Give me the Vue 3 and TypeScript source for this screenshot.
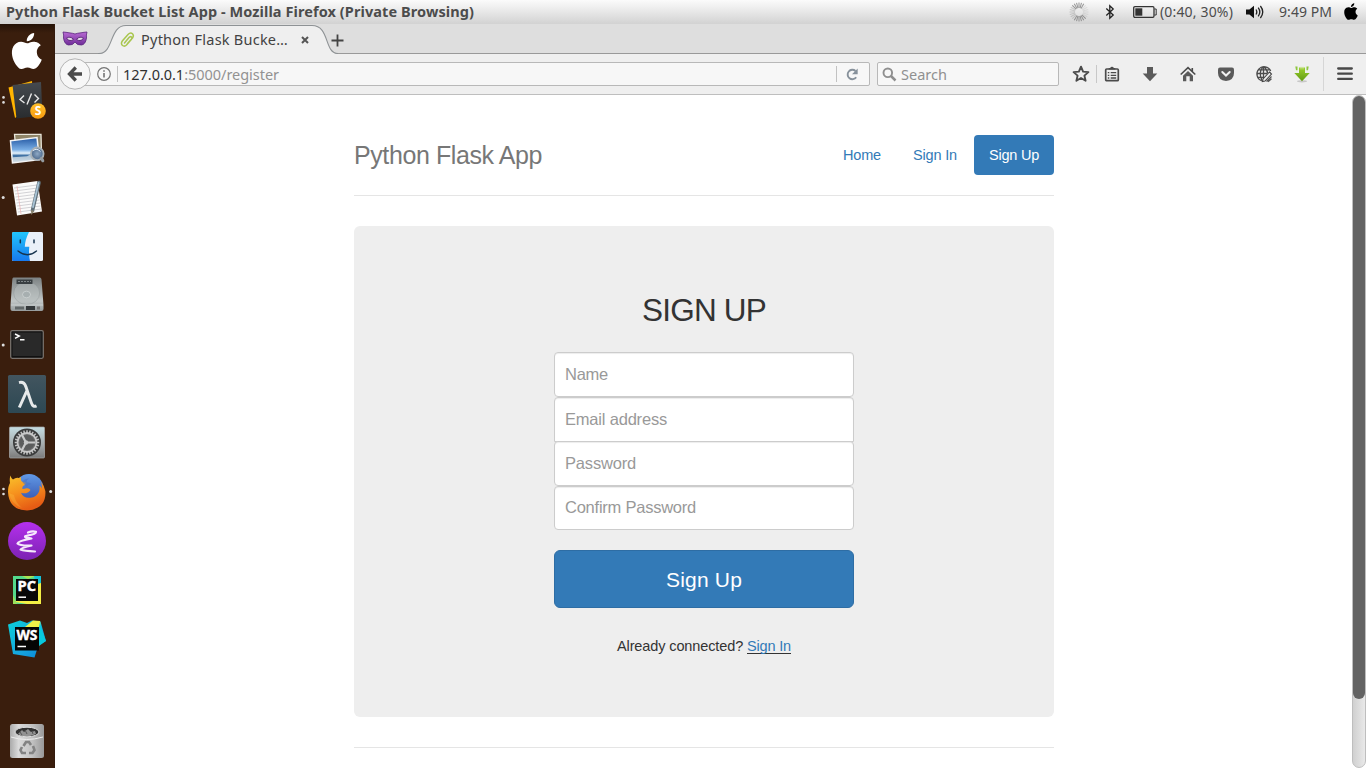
<script setup lang="ts">
import { ref } from 'vue'

interface NavItem { label: string; width: number; active?: boolean }
interface Field { label: string; type: string; width: number; cls: string }

const nav: NavItem[] = [
  { label: 'Home', width: 38 },
  { label: 'Sign In', width: 44 },
  { label: 'Sign Up', width: 50, active: true },
]
const fields: Field[] = [
  { label: 'Name', type: 'text', width: 43, cls: 'name' },
  { label: 'Email address', type: 'email', width: 102, cls: 'email' },
  { label: 'Password', type: 'password', width: 71, cls: 'password' },
  { label: 'Confirm Password', type: 'password', width: 131, cls: 'confirm' },
]
const values = ref<string[]>(['', '', '', ''])
const gearTeeth = Array.from({ length: 24 }, (_, i) => i * 15)
const rays = Array.from({ length: 24 }, (_, i) => i * 15)

// Tracks a label so that it fills exactly the given width in pixels.
const vFit = {
  mounted(el: HTMLElement, binding: { value: number }) {
    const count = (el.textContent ?? '').length
    const natural = el.getBoundingClientRect().width
    if (count) el.style.letterSpacing = `${(binding.value - natural) / count}px`
  },
}
</script>

<template>
  <div class="desktop">
    <header class="titlebar">
      <span class="title"><span v-fit="468">Python Flask Bucket List App - Mozilla Firefox (Private Browsing)</span></span>
      <div class="tray">
        <svg class="i-spin" width="20" height="20" viewBox="-10 -10 20 20">
          <line v-for="(r, i) in rays" :key="r" x1="0" y1="-4" x2="0" y2="-9.500" stroke="#777" stroke-width="1" :opacity="(i > 2 && i < 9) ? 0.15 : (i > 14 && i < 21) ? 0.3 : 0.75" :transform="`rotate(${r})`" />
        </svg>
        <svg class="i-bt" width="10" height="16" viewBox="0 0 10 16"><path d="M1.3 4.5 8.2 11 4.8 14.2V1.8L8.2 5 1.3 11.5" fill="none" stroke="#222" stroke-width="1.3" /></svg>
        <svg class="i-bat" width="24" height="12" viewBox="0 0 24 12"><rect x=".7" y=".7" width="20.3" height="10.6" rx="1.2" fill="none" stroke="#333" stroke-width="1.3" /><rect x="2.3" y="2.3" width="7" height="7.4" fill="#333" /><path d="M21.5 3h1.7v6h-1.7" fill="none" stroke="#333" /></svg>
        <span class="bat-text"><span v-fit="73">(0:40, 30%)</span></span>
        <svg class="i-vol" width="18" height="14" viewBox="0 0 18 14"><path d="M0 4.5h3.4L8 .7v12.6L3.4 9.5H0z" fill="#111" /><path d="M10 4.5q1.6 2.5 0 5M12.2 2.7q3.2 4.3 0 8.6M14.4 1q4.7 6 0 12" fill="none" stroke="#222" stroke-width="1.3" /></svg>
        <span class="clock"><span v-fit="53">9:49 PM</span></span>
        <svg class="i-apple" width="14" height="17" viewBox="3.6 1.8 16.8 20.4" preserveAspectRatio="none"><path d="M18.71 19.5c-.83 1.24-1.71 2.45-3.05 2.47-1.34.03-1.77-.79-3.29-.79-1.53 0-2 .77-3.27.82-1.31.05-2.3-1.32-3.14-2.53C4.25 17 2.94 12.45 4.7 9.39c.87-1.52 2.43-2.48 4.12-2.51 1.28-.02 2.5.87 3.29.87.78 0 2.26-1.07 3.81-.91.65.03 2.47.26 3.64 1.98-.09.06-2.17 1.28-2.15 3.81.03 3.02 2.65 4.03 2.68 4.04-.03.07-.42 1.44-1.38 2.83M13 3.5c.73-.83 1.94-1.46 2.94-1.5.13 1.17-.34 2.35-1.04 3.19-.69.85-1.83 1.51-2.95 1.42-.15-1.15.41-2.35 1.05-3.11z" fill="#000" /></svg>
      </div>
    </header>

    <div class="body">
      <aside class="dock">
        <svg viewBox="0 0 55 49"><path transform="translate(4.8 3.4) scale(1.84 1.8)" d="M18.71 19.5c-.83 1.24-1.71 2.45-3.05 2.47-1.34.03-1.77-.79-3.29-.79-1.53 0-2 .77-3.27.82-1.31.05-2.3-1.32-3.14-2.53C4.25 17 2.94 12.45 4.7 9.39c.87-1.52 2.43-2.48 4.12-2.51 1.28-.02 2.5.87 3.29.87.78 0 2.26-1.07 3.81-.91.65.03 2.47.26 3.64 1.98-.09.06-2.17 1.28-2.15 3.81.03 3.02 2.65 4.03 2.68 4.04-.03.07-.42 1.44-1.38 2.83M13 3.5c.73-.83 1.94-1.46 2.94-1.5.13 1.17-.34 2.35-1.04 3.19-.69.85-1.83 1.51-2.95 1.42-.15-1.15.41-2.35 1.05-3.11z" fill="#fff" /></svg>

        <!-- code editor -->
        <svg viewBox="0 0 55 49">
          <defs><linearGradient id="ed" x2="0" y2="1"><stop stop-color="#454a4f" /><stop offset="1" stop-color="#292c2f" /></linearGradient><linearGradient id="edb" x2="0" y2="1"><stop stop-color="#ffc02a" /><stop offset="1" stop-color="#f79a10" /></linearGradient></defs>
          <circle cx="3.5" cy="22.4" r="1.3" fill="#ddd" /><circle cx="3.5" cy="27.4" r="1.3" fill="#ddd" />
          <path d="M8.5 12.5 32 6l1 24-18 13z" fill="#ffb400" />
          <path d="M12.5 10 41 7l1.5 33.500-26 3z" fill="url(#ed)" />
          <path d="m24 20.5-4 4 4.500 3.500M31.5 18.500l-4.500 11M34.500 19.500l4 4-4 4" fill="none" stroke="#e8e8e8" stroke-width="1.400" />
          <circle cx="38" cy="36" r="7.800" fill="url(#edb)" />
          <text x="38" y="40.300" text-anchor="middle" font-size="12" font-weight="700" fill="#fff">S</text>
        </svg>

        <!-- image viewer -->
        <svg viewBox="0 0 55 49">
          <defs><linearGradient id="sea" x2="0" y2="1"><stop stop-color="#2357a2" /><stop offset=".48" stop-color="#79aee5" /><stop offset=".62" stop-color="#e6f2fb" /><stop offset=".72" stop-color="#2f659c" /><stop offset="1" stop-color="#c4d4dc" /></linearGradient><radialGradient id="lens"><stop stop-color="#8fa9c5" /><stop offset="1" stop-color="#4a678a" /></radialGradient></defs>
          <g transform="translate(0 2.300)">
            <path d="M14.500 8h26.500l.500 20-25 2z" fill="#8f8467" stroke="#e9e6db" stroke-width="1.300" />
            <path d="M10.500 14.500 37 11.300l2.500 22-27 3.200z" fill="url(#sea)" stroke="#f4f4f4" stroke-width="1.500" />
            <path d="m13 31 14-1 10-5 2 8-26 3z" fill="#d7e2e8" opacity=".75" />
            <circle cx="37.300" cy="27.500" r="6.300" fill="url(#lens)" stroke="#a8b0b6" stroke-width="1.800" />
            <path d="M33 24.300q4-3 7.500 1" stroke="#e6f2ff" fill="none" /><path d="m41.500 32 1.300 2.500" stroke="#949ba0" stroke-width="3" stroke-linecap="round" />
          </g>
        </svg>

        <!-- text editor -->
        <svg viewBox="0 0 55 49">
          <circle cx="3.200" cy="24.500" r="1.500" fill="#ddd" />
          <path d="m12.500 11.500 25-3.500 4.500 30.500-25 4z" fill="#fbfbfa" />
          <path d="m14 15 23-3m-22.500 6 23-3M15 21l23-3m-22.500 6 23-3m-22.500 6 23-3m-22.500 6 23-3M17 33l23-3m-22.500 6 23-3m-22.500 6 23-3" stroke="#c8c8cb" stroke-width=".8" />
          <path d="m17 13 4 28" stroke="#eeb0b0" stroke-width=".7" />
          <path d="m39 9.500-6.500 28" stroke="#62717a" stroke-width="3.600" stroke-linecap="round" /><path d="m38.500 10-5.500 24" stroke="#a9c4d6" stroke-width="1.800" stroke-linecap="round" /><path d="m31 37 .3 5 3-4z" fill="#8d8672" />
        </svg>

        <!-- file manager -->
        <svg viewBox="0 0 55 49">
          <defs><linearGradient id="fi" x2="0" y2="1"><stop stop-color="#21c5fb" /><stop offset="1" stop-color="#1779ee" /></linearGradient></defs>
          <rect x="12" y="10" width="31" height="29" rx="1.500" fill="#eaf0f8" />
          <path d="M13.500 10H29Q25 18 24.800 24.800h4.500Q28.500 32 30 39H13.500Q12 39 12 37.500v-26Q12 10 13.500 10z" fill="url(#fi)" />
          <path d="M20.300 18v2.700M34 18v2.700" stroke="#17344f" stroke-width="1.500" stroke-linecap="round" /><path d="M18 29q9.500 7.500 18.500 0" fill="none" stroke="#17344f" stroke-width="1.300" stroke-linecap="round" />
        </svg>

        <!-- hard disk -->
        <svg viewBox="0 0 55 49">
          <defs><linearGradient id="hd" x2="0" y2="1"><stop stop-color="#7c8283" /><stop offset=".7" stop-color="#c1c6c6" /><stop offset="1" stop-color="#969c9d" /></linearGradient></defs>
          <path d="M13.500 6.500h26.300q1.500 0 1.700 2L43.500 34v4q0 2-2 2H12.500q-2 0-2-2v-4l1.800-25.500q.1-2 1.200-2z" fill="url(#hd)" />
          <ellipse cx="26.700" cy="22" rx="13" ry="11.500" fill="#b7bebe" opacity=".5" stroke="#777f80" stroke-width=".5" /><ellipse cx="26.500" cy="23.500" rx="4" ry="3.300" fill="#a7afb0" stroke="#d8dddd" stroke-width=".6" />
          <rect x="16.500" y="8.500" width="16" height="4.500" fill="#383e41" /><path d="M18 10.500h13" stroke="#7d8486" stroke-dasharray="2 1" /><path d="M11 34h32" stroke="#dadede" stroke-width=".7" /><rect x="15" y="35.500" width="9" height="3" fill="#626869" /><rect x="26" y="35" width="9" height="4" fill="#34383a" /><rect x="37" y="35.500" width="3" height="3" fill="#777" />
        </svg>

        <!-- terminal -->
        <svg viewBox="0 0 55 49">
          <circle cx="3.200" cy="25" r="1.500" fill="#ddd" />
          <rect x="10.700" y="10.700" width="32.600" height="27.600" rx="1.500" fill="#111" stroke="#77716c" stroke-width="1.300" /><rect x="12.500" y="12.500" width="29" height="23.500" fill="#292929" />
          <path d="m15 14 4.300 2-4.300 2.300M20 19.700h4.500" fill="none" stroke="#fff" stroke-width="1.400" />
        </svg>

        <!-- lambda -->
        <svg viewBox="0 0 55 49">
          <defs><linearGradient id="la" x2="0" y2="1"><stop stop-color="#42555f" /><stop offset="1" stop-color="#2d4853" /></linearGradient></defs>
          <rect x="8" y="6" width="38" height="38" rx="1.500" fill="url(#la)" />
          <path d="M19 13.600q5-1.300 6.800 4l5.500 16q1.500 5 5.200 3.300M27 21.500 19.300 38.500" fill="none" stroke="#e6e9ea" stroke-width="3" />
        </svg>

        <!-- settings -->
        <svg viewBox="0 0 55 49">
          <defs><linearGradient id="se" x2="0" y2="1"><stop stop-color="#c5dde2" /><stop offset=".55" stop-color="#a7adae" /><stop offset="1" stop-color="#7b7b7b" /></linearGradient></defs>
          <rect x="9.500" y="9" width="35" height="31" rx="1" fill="url(#se)" stroke="#a8aaaa" stroke-width=".7" />
          <g transform="translate(27 24.500)"><circle r="14" fill="#3b3c3c" /><line v-for="a in gearTeeth" :key="a" y1="-9.500" y2="-12.300" stroke="#c0c1c1" stroke-width="1.500" :transform="`rotate(${a})`" /><circle r="9.500" fill="#6d6e6e" stroke="#c8c8c8" stroke-width="1.800" /><circle r="7.500" fill="#5c5d5d" /><path d="M-1 0h9.500M-1 0-5-7.500M-1 0-5 7.500" stroke="#c8c9c9" stroke-width="2.200" /><circle cx="-1" r="2.200" fill="#c8c9c9" /></g>
        </svg>

        <!-- firefox -->
        <svg viewBox="0 0 55 49">
          <defs><linearGradient id="fx" x2=".4" y2="1"><stop stop-color="#f9c32b" /><stop offset=".5" stop-color="#f6921e" /><stop offset="1" stop-color="#e65c14" /></linearGradient><linearGradient id="fb" x2="0" y2="1"><stop stop-color="#629ae6" /><stop offset="1" stop-color="#3452ad" /></linearGradient></defs>
          <circle cx="3.500" cy="22" r="1.300" fill="#ddd" /><circle cx="3.500" cy="27" r="1.300" fill="#ddd" /><circle cx="50.700" cy="24.500" r="1.500" fill="#ddd" />
          <circle cx="29" cy="21.500" r="14.500" fill="url(#fb)" />
          <path d="M10.500 8.500q.6 3 2.500 4 3-2.500 6-1.500l2-1q-.500 3.500.8 4.500 3.700.3 4.200 1.500-.200 2-3 3-1 1.500-.500 3 2 0 4-.700 3-.300 4 1.700-1.500 2.500-4.500 3.200-3 .4-5-.500 2.500 6 9.500 5 6-.5 8.500-6 1-3 .5-6 2.200 1 2.200 3 .8-3-.8-7 3.500 4 4.500 9.500Q46.500 42 27 43.500 9 43 8 25q0-6 2-9-.700-4 .5-7.500z" fill="url(#fx)" />
          <path d="M22 14.500q3-3 7-3.200-3 2-2.500 4.200 3.500-.5 5 1.500-3 .5-5 3" fill="#4774c9" opacity=".65" />
          <path d="M9 26q2 11 13 15-7-6-8-13-3-1-5-2z" fill="#ffd14b" opacity=".25" />
        </svg>

        <!-- emacs -->
        <svg viewBox="0 0 55 49">
          <defs><linearGradient id="em" x2="0" y2="1"><stop stop-color="#b530ed" /><stop offset="1" stop-color="#7b22b2" /></linearGradient></defs>
          <circle cx="27" cy="25" r="19" fill="url(#em)" />
          <path d="M28 16.500Q32 14.800 36 15.800 36 18.500 27.500 19.500 21 21 31.500 22.500 18 25 17.500 27.500 20 30 31.500 29.500 21 32 20.500 33.500 24 35 35 35.500" fill="none" stroke="#fff" stroke-width="2.200" stroke-linejoin="round" stroke-linecap="round" opacity=".9" />
        </svg>

        <!-- pycharm -->
        <svg viewBox="0 0 55 49">
          <rect x="13" y="11" width="28" height="28" fill="#54d98c" /><path d="m22 11 6 3 7-3z" fill="#a9e452" /><path d="M34 11h7v13l-5-4z" fill="#15c2d8" /><path d="m34 20 7-2v21H27l-12-2z" fill="#f3ef45" /><path d="m13 30 4 9h-4z" fill="#9be05b" />
          <rect x="16" y="14" width="22" height="22" fill="#080808" /><text class="logo" x="17.500" y="26.300" font-size="13.500" font-weight="700" textLength="18.500" lengthAdjust="spacingAndGlyphs" fill="#fff" stroke="#fff" stroke-width=".4">PC</text><path d="M18.500 32.200h7.500" stroke="#fff" stroke-width="1.500" />
        </svg>

        <!-- webstorm -->
        <svg viewBox="0 0 55 49">
          <defs><linearGradient id="ws" x2="1" y2="1"><stop stop-color="#0bd0d8" /><stop offset=".6" stop-color="#16a5df" /><stop offset="1" stop-color="#0782d6" /></linearGradient></defs>
          <path d="m8 10.500 12-4 7 2.500 5-2.500 8.500 1L46 27l-7.500 4-4 12.500L13 40z" fill="url(#ws)" /><path d="m25 13 8-6.500 7 .5 1 6z" fill="#eff148" /><path d="m40 8 2 8 4 11-7 5V13z" fill="#08c9dc" />
          <rect x="15" y="13" width="24" height="23.500" fill="#050505" /><text class="logo" x="16.500" y="26.300" font-size="13.500" font-weight="700" textLength="21" lengthAdjust="spacingAndGlyphs" fill="#fff" stroke="#fff" stroke-width=".4">WS</text><path d="M17.500 32.500h8.500" stroke="#fff" stroke-width="1.500" />
        </svg>

        <!-- trash -->
        <svg class="trash" viewBox="0 0 55 49">
          <defs><linearGradient id="tr"><stop stop-color="#aaa" /><stop offset=".25" stop-color="#dadada" /><stop offset=".65" stop-color="#c2c2c2" /><stop offset="1" stop-color="#999" /></linearGradient></defs>
          <rect x="10" y="8" width="34" height="34" rx="2.500" fill="url(#tr)" /><path d="M11 21q15 5 32 0" fill="none" stroke="#eee" stroke-width="1" />
          <ellipse cx="27" cy="16" rx="12" ry="4.800" fill="#333" stroke="#e0e0e0" stroke-width="1" /><path d="m18 18 4-4 2 2 4-3 3 3 4-1 1 3-6 2h-8z" fill="#aaa" opacity=".8" /><path d="m20 16 2 3m3-5 2 4m5-3 1 3" stroke="#555" />
          <g fill="none" stroke="#838383" stroke-width="2.600"><path d="m23.500 30 2.500-4h3l2 3" /><path d="m33 30 1.500 4-2 3H29" /><path d="M26 37h-4l-1.500-3 1.500-3" /></g>
        </svg>
      </aside>

      <section class="browser">
        <div class="tabs">
          <svg class="mask" width="26" height="18" viewBox="0 0 26 18"><defs><linearGradient id="mk" x2="0" y2="1"><stop stop-color="#b96bd4" /><stop offset="1" stop-color="#6f2c98" /></linearGradient></defs><path d="M1 2q3 .2 6 .8 4 .4 6 1.200 2-.8 6-1.200 3-.6 6-.8-1 3-.5 6-1 6.500-5 7-4.500.5-6.500-3-2 3.500-6.500 3-4-.5-5-7Q2 5 1 2z" fill="url(#mk)" stroke="#5b267d" stroke-width=".8" /><path d="M4.500 8.300q3.500-2.600 7 1-3.500 3-7-1zM21.500 8.300q-3.500-2.600-7 1 3.500 3 7-1z" fill="#e5d9ea" stroke="#4c1f68" stroke-width=".8" /></svg>
          <div class="tab">
            <svg class="tab-shape" width="240" height="30" viewBox="0 0 240 30"><path d="M0 30V29.500h1c15 0 10-28 27-28h186c18 0 12 28 26 28v.5z" fill="#efefef" /><path d="M0 29.500h1c15 0 10-28 27-28h186c18 0 12 28 26 28" fill="none" stroke="#8e9295" stroke-width="1.100" /></svg>
            <svg class="clip" width="18" height="18" viewBox="0 0 18 18"><path d="M6.500 12 11 6.500q1.500-1.500 2.500-.500 1 1 0 2.300L8.500 14q-2 2-4 .500-2-2-.200-4.500L10 3.500q2.500-2.500 4.500-.7 1.700 1.800 0 4.200L9.500 12.500" fill="none" stroke="#a9c64f" stroke-width="1.500" stroke-linecap="round" /></svg>
            <span class="tab-label"><span v-fit="147">Python Flask Bucke…</span></span>
            <svg class="close" width="8" height="8" viewBox="0 0 8 8"><path d="m1 1 6 6M7 1 1 7" stroke="#555" stroke-width="2" /></svg>
          </div>
          <svg class="plus" width="13" height="13" viewBox="0 0 13 13"><path d="M6.500.5v12M.5 6.500h12" stroke="#444" stroke-width="1.800" /></svg>
        </div>

        <div class="toolbar">
          <svg class="back" width="32" height="32" viewBox="0 0 32 32"><circle cx="16" cy="16" r="15.200" fill="#f7f7f7" stroke="#b4b4b4" /><path d="M16.800 9.500 10.500 16l6.300 6.500M11 16h12" fill="none" stroke="#4b4b4b" stroke-width="3.300" /></svg>
          <div class="urlbar">
            <svg class="info" width="14" height="14" viewBox="0 0 14 14"><circle cx="7" cy="7" r="6.300" fill="none" stroke="#747474" stroke-width="1.200" /><path d="M7 6v4.500M7 3.200v1.600" stroke="#6b6b6b" stroke-width="1.500" /></svg>
            <i class="bar" />
            <span class="url"><span v-fit="156"><b>127.0.0.1</b>:5000/register</span></span>
            <i class="bar reload-bar" />
            <svg class="reload" width="13" height="13" viewBox="0 0 13 13"><path d="M10.200 9.200A4.700 4.700 0 1 1 9.500 3" fill="none" stroke="#87919b" stroke-width="1.900" /><path d="M11.700.5v5.700H6z" fill="#87919b" /></svg>
          </div>
          <div class="search">
            <svg width="15" height="15" viewBox="0 0 15 15"><circle cx="5.800" cy="5.800" r="4.300" fill="none" stroke="#8f8f8f" stroke-width="1.900" /><path d="m9 9 4.500 4.500" stroke="#8f8f8f" stroke-width="2.500" /></svg>
            <span class="search-label"><span v-fit="46">Search</span></span>
          </div>
          <svg class="star" width="18" height="18" viewBox="0 0 18 18"><path d="m9 1.700 2.100 4.900 5.300.5-4 3.500 1.200 5.200L9 13l-4.600 2.800 1.200-5.200-4-3.500 5.300-.5z" fill="none" stroke="#4b4b4b" stroke-width="1.900" stroke-linejoin="round" /></svg>
          <i class="sep" />
          <div class="tools">
            <svg viewBox="0 0 18 18"><rect x="2.700" y="4" width="12.600" height="11.700" rx="1" fill="#efefef" stroke="#4b4b4b" stroke-width="1.700" /><path d="M5.700 4.500V3h1.500a1.900 1.900 0 0 1 3.600 0h1.500v1.500z" fill="#4b4b4b" /><path d="M4.800 7.700h1.500M7.700 7.700h5.500M4.800 10.300h1.500M7.700 10.300h5.500M4.800 13h1.500M7.700 13h5.500" stroke="#4b4b4b" stroke-width="1.300" /></svg>
            <svg viewBox="0 0 18 18"><path d="M6 2h6v6.500h4.300L9 16.200 1.700 8.500H6z" fill="#5a5a5a" /></svg>
            <svg viewBox="0 0 18 18"><path d="M1.700 9.500 9 2.700l7.300 6.800M13.300 3v3.500" fill="none" stroke="#4b4b4b" stroke-width="1.600" /><path d="m4 10.800 5-4.700 5 4.700V16.300h-3.300v-5H7.300v5H4z" fill="#5a5a5a" /></svg>
            <svg viewBox="0 0 18 18"><path d="M3 2.500h12q2 0 2 2V8q0 7-8 8Q1 15 1 8V4.500q0-2 2-2z" fill="#5a5a5a" /><path d="M5.300 7 9 10.500 12.700 7" fill="none" stroke="#f1f1f1" stroke-width="2" stroke-linecap="round" /></svg>
            <svg viewBox="0 0 18 18"><g fill="none" stroke="#4c4c4c" stroke-width="1.300"><path d="M15.700 6A7.200 7.200 0 1 0 7 15.800M8.500 1.500v13M1.500 8.500h11M3 4.900h11.500M3 12.300h6M8 1.700Q3 8 7 15M9 1.700Q12.500 5 12.500 8" /></g><path d="m14.500 7 2 2-6.500 7-2.500.5.500-2.500z" fill="#eee" stroke="#444" stroke-width="1.100" /><path d="m11.500 16.500 5-5M13 16.700l3.500-3" stroke="#555" stroke-width="1.300" /></svg>
            <svg viewBox="0 0 18 18"><defs><linearGradient id="gd" x2="0" y2="1"><stop stop-color="#9ad02e" /><stop offset="1" stop-color="#629b12" /></linearGradient></defs><ellipse cx="9" cy="16.300" rx="5" ry="1.100" fill="#c8c8c8" /><path d="M6 2.500h6V8h4.700L9 16.300 1.300 8H6z" fill="url(#gd)" /><path d="M2.300 1.500h2.200v3.700H3zM15.700 1.500h-2.200v3.700H15z" fill="#8dc63f" /><path d="M8 1.500v3M10 1.500v3" stroke="#ddedb8" stroke-width=".7" /></svg>
          </div>
          <i class="sep tall" />
          <svg class="menu" width="16" height="14" viewBox="0 0 16 14"><path d="M1.200 1.500h13.600M1.200 6.700h13.600M1.200 11.900h13.600" stroke="#484848" stroke-width="2.300" stroke-linecap="round" /></svg>
        </div>

        <div class="viewport">
          <main class="page">
            <header class="page-header">
              <h3><span v-fit="188">Python Flask App</span></h3>
              <nav>
                <a v-for="n in nav" :key="n.label" :class="{ active: n.active }"><span v-fit="n.width">{{ n.label }}</span></a>
              </nav>
            </header>
            <div class="jumbotron">
              <h1><span v-fit="124">SIGN UP</span></h1>
              <form @submit.prevent>
                <label v-for="(f, i) in fields" :key="f.label" class="field" :class="f.cls">
                  <span v-show="!values[i]" class="hint"><span v-fit="f.width">{{ f.label }}</span></span>
                  <input v-model="values[i]" :type="f.type" :aria-label="f.label">
                </label>
                <button type="submit"><span v-fit="76">Sign Up</span></button>
              </form>
              <p><span v-fit="130">Already connected? </span><a><span v-fit="44">Sign In</span></a></p>
            </div>
            <footer />
          </main>
          <div class="scroll"><div class="thumb" /></div>
        </div>
      </section>
    </div>
  </div>
</template>

<style>
body { margin: 0; overflow: hidden; }
</style>

<style scoped>
* { box-sizing: border-box; }
svg { display: block; flex: none; }
span { white-space: pre; }
.desktop { width: 1366px; height: 768px; overflow: hidden; background: #fff; font-family: "Noto Sans", "Open Sans", sans-serif; display: flex; flex-direction: column; }
.titlebar { height: 24px; flex: none; display: flex; justify-content: space-between; align-items: center; padding: 0 8px 0 6px; background: linear-gradient(#fbfbfb, #e9e9e9 45%, #d2d2d2); color: #4c4c4c; }
.title { font-size: 14.500px; line-height: 22px; height: 24px; font-weight: 700; }
.tray { display: flex; align-items: center; height: 24px; font-size: 14px; line-height: 24px; }
.i-bt { margin-left: 16px; }
.i-bat { margin-left: 18px; }
.bat-text { width: 73px; margin-left: 3px; }
.i-vol { margin-left: 13px; }
.clock { width: 53px; margin-left: 15px; }
.i-apple { margin-left: 12px; margin-bottom: 2px; }
.body { flex: 1; display: flex; min-height: 0; }
.dock { width: 55px; flex: none; background: linear-gradient(#241207, #3a1e0d 9px); border-right: 1px solid #321a0d; padding-top: 2px; display: flex; flex-direction: column; }
.dock svg { width: 55px; height: 49px; }
.dock .trash { margin-top: 53px; }
.logo { font-family: "Open Sans", sans-serif; }
.browser { flex: 1; min-width: 0; display: flex; flex-direction: column; }
.tabs { height: 30px; flex: none; background: #dedede; box-shadow: inset 0 -1px #999; display: flex; align-items: center; padding-left: 7px; }
.mask { margin-bottom: 1px; }
.tab { position: relative; width: 240px; height: 30px; margin-left: 10px; display: flex; align-items: center; padding-left: 20px; }
.tab-shape { position: absolute; left: 0; top: 0; }
.clip, .tab-label, .close { position: relative; }
.clip { margin-top: 1px; }
.tab-label { width: 147px; margin-left: 5px; font-size: 14.500px; line-height: 30px; color: #424242; }
.close { margin-left: 13px; margin-top: 2px; }
.plus { margin-left: -7px; margin-top: 2px; z-index: 1; }
.toolbar { height: 41px; flex: none; background: #efefef; border-bottom: 1px solid #bebebe; display: flex; align-items: center; padding-left: 4px; }
.back { z-index: 1; }
.urlbar { width: 795px; height: 24px; margin-left: -16px; display: flex; align-items: center; border: 1px solid #b8b8b8; border-radius: 2px; background: #f7f7f7; padding-left: 21px; }
.bar { width: 1px; height: 16px; background: #c2c2c2; margin-left: 6px; }
.url { margin-left: 5px; width: 156px; font-size: 14.500px; line-height: 22px; color: #929292; }
.url b { font-weight: 400; color: #303030; }
.reload-bar { margin-left: 557px; }
.reload { margin-left: 9px; }
.search { width: 182px; height: 24px; margin-left: 7px; border: 1px solid #b8b8b8; border-radius: 2px; background: #f7f7f7; display: flex; align-items: center; padding-left: 4px; }
.search-label { margin-left: 4px; font-size: 14.500px; line-height: 22px; color: #909090; }
.star { margin-left: 13px; }
.sep { width: 1px; height: 18px; margin-left: 6px; background: #c8c8c8; }
.sep.tall { height: 34px; margin-left: 2px; background: #d6d6d6; }
.tools { display: flex; margin-left: -4px; }
.tools svg { width: 38px; height: 18px; }
.menu { margin-left: 13px; }
.viewport { flex: 1; min-height: 0; display: flex; justify-content: space-between; overflow: hidden; background: #fff; }
.page { width: 700px; margin-left: 299px; padding-top: 40px; font-family: "Liberation Sans", Arial, sans-serif; color: #333; }
.page-header { height: 61px; display: flex; justify-content: space-between; border-bottom: 1px solid #e5e5e5; }
h3 { margin: 0; font-weight: 400; font-size: 25px; line-height: 40px; color: #777; }
nav { display: flex; gap: 2px; }
nav a { height: 40px; padding: 0 15px; line-height: 40px; font-size: 14.500px; color: #337ab7; border-radius: 4px; }
nav a.active { background: #337ab7; color: #fff; }
.jumbotron { height: 491px; margin-top: 30px; padding-top: 66px; background: #eee; border-radius: 6px; text-align: center; }
h1 { margin: 0; height: 60px; font-weight: 400; font-size: 31.500px; line-height: 36px; }
form { width: 300px; margin: 0 auto; }
.field { display: flex; position: relative; width: 300px; height: 45px; }
.hint { position: absolute; left: 11px; top: 0; font-size: 16.500px; line-height: 45px; color: #999; pointer-events: none; }
input { width: 100%; height: 100%; margin: 0; padding: 10px; font: 16px "Liberation Sans", sans-serif; color: #555; border: 1px solid #ccc; border-radius: 4px; background: #fff; box-shadow: inset 0 1px 1px rgba(0, 0, 0, .075); outline: none; }
.email { margin-bottom: -1px; }
.email input { border-bottom-left-radius: 0; border-bottom-right-radius: 0; }
.confirm { height: 44px; }
.confirm .hint { line-height: 43px; }
button { display: block; width: 300px; height: 58px; margin: 20px 0 0; padding: 0; border: 1px solid #2e6da4; border-radius: 6px; background: #337ab7; color: #fff; font: 21px/58px "Liberation Sans", sans-serif; }
p { display: flex; justify-content: center; margin: 28px 0 0; font-size: 14.500px; line-height: 20px; }
p a { color: #337ab7; height: 18px; border-bottom: 1px solid #333; }
footer { margin-top: 30px; border-top: 1px solid #e5e5e5; }
.scroll { width: 14px; height: 673px; border: 1px solid #bebebe; border-radius: 7px; background: linear-gradient(90deg, #d0d0d0, #e9e9e9); }
.thumb { height: 603px; border-radius: 6px; background: #636363; }
</style>
